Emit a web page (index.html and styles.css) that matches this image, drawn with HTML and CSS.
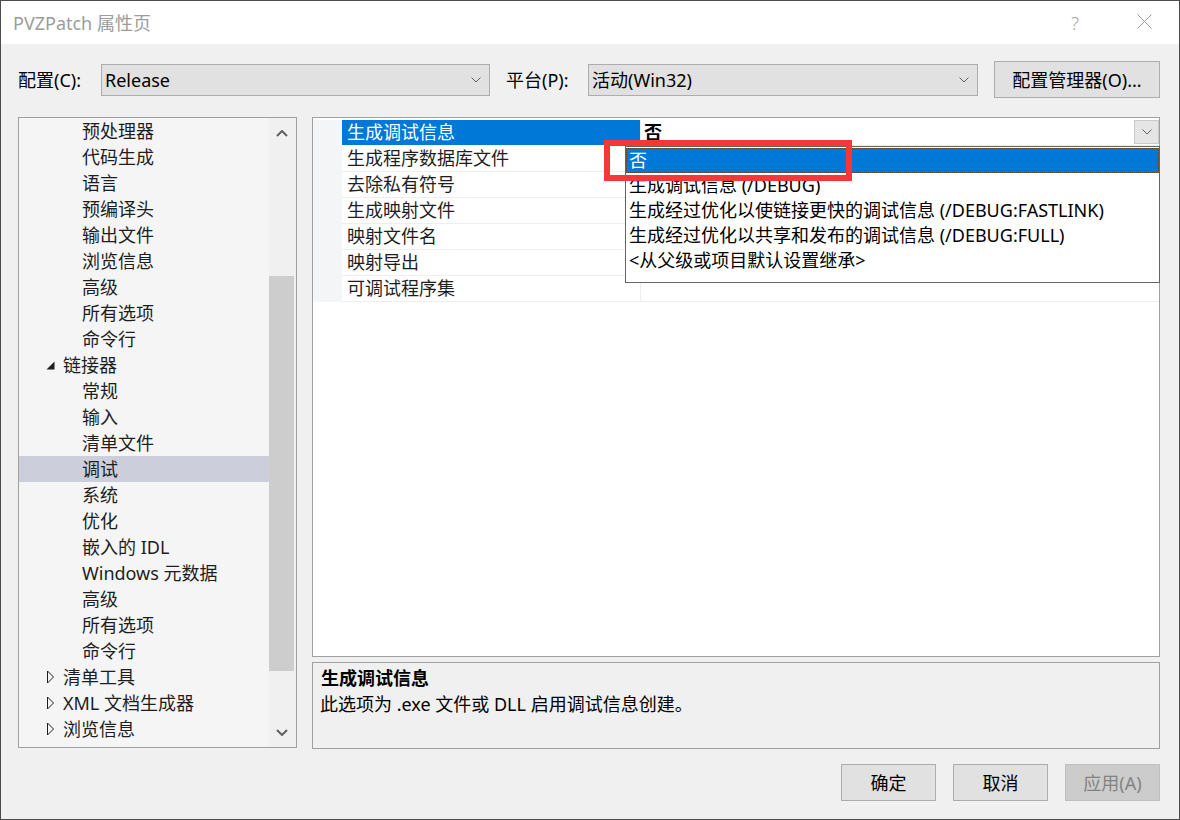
FILE: index.html
```html
<!DOCTYPE html>
<html lang="zh-CN">
<head>
<meta charset="utf-8">
<title>PVZPatch 属性页</title>
<link rel="stylesheet" href="styles.css">
</head>
<body>
<div class="window">
  <div class="titlebar">
    <span class="title">PVZPatch 属性页</span>
    <span class="tb-help">?</span>
    <svg class="tb-close" width="15" height="15" viewBox="0 0 15 15"><path d="M0.5 0.5 L14.5 14.5 M14.5 0.5 L0.5 14.5" stroke="#9a9a9a" stroke-width="1" fill="none"/></svg>
  </div>

  <div class="config-row">
    <span class="lbl lbl-config">配置(C):</span>
    <div class="combo combo-config">
      <span class="combo-text">Release</span>
      <svg class="chev" width="10" height="6" viewBox="0 0 10 6"><path d="M0.5 0.5 L5 5 L9.5 0.5" stroke="#606060" stroke-width="1" fill="none"/></svg>
    </div>
    <span class="lbl lbl-platform">平台(P):</span>
    <div class="combo combo-platform">
      <span class="combo-text">活动(Win32)</span>
      <svg class="chev" width="10" height="6" viewBox="0 0 10 6"><path d="M0.5 0.5 L5 5 L9.5 0.5" stroke="#606060" stroke-width="1" fill="none"/></svg>
    </div>
    <button class="btn btn-manager">配置管理器(O)...</button>
  </div>

  <div class="main">
    <div class="tree">
      <ul class="tree-list">
        <li class="node l2">预处理器</li>
        <li class="node l2">代码生成</li>
        <li class="node l2">语言</li>
        <li class="node l2">预编译头</li>
        <li class="node l2">输出文件</li>
        <li class="node l2">浏览信息</li>
        <li class="node l2">高级</li>
        <li class="node l2">所有选项</li>
        <li class="node l2">命令行</li>
        <li class="node l1"><svg class="tri" width="9" height="9" viewBox="0 0 9 9"><path d="M8.5 0.5 L8.5 8.5 L0.5 8.5 Z" fill="#1e1e1e"/></svg>链接器</li>
        <li class="node l2">常规</li>
        <li class="node l2">输入</li>
        <li class="node l2">清单文件</li>
        <li class="node l2 selected">调试</li>
        <li class="node l2">系统</li>
        <li class="node l2">优化</li>
        <li class="node l2">嵌入的 IDL</li>
        <li class="node l2">Windows 元数据</li>
        <li class="node l2">高级</li>
        <li class="node l2">所有选项</li>
        <li class="node l2">命令行</li>
        <li class="node l1"><svg class="tri" width="9" height="14" viewBox="0 0 9 14"><path d="M1.5 1 L7.5 7 L1.5 13 Z" stroke="#1e1e1e" stroke-width="1" fill="none"/></svg>清单工具</li>
        <li class="node l1"><svg class="tri" width="9" height="14" viewBox="0 0 9 14"><path d="M1.5 1 L7.5 7 L1.5 13 Z" stroke="#1e1e1e" stroke-width="1" fill="none"/></svg>XML 文档生成器</li>
        <li class="node l1"><svg class="tri" width="9" height="14" viewBox="0 0 9 14"><path d="M1.5 1 L7.5 7 L1.5 13 Z" stroke="#1e1e1e" stroke-width="1" fill="none"/></svg>浏览信息</li>
      </ul>
      <div class="scrollbar">
        <div class="sb-arrow">
          <svg width="12" height="7" viewBox="0 0 12 7"><path d="M1 6 L6 1 L11 6" stroke="#606060" stroke-width="2" fill="none"/></svg>
        </div>
        <div class="sb-track"><div class="sb-thumb" style="margin-top:128px;height:395px"></div></div>
        <div class="sb-arrow">
          <svg width="12" height="7" viewBox="0 0 12 7"><path d="M1 1 L6 6 L11 1" stroke="#606060" stroke-width="2" fill="none"/></svg>
        </div>
      </div>
    </div>

    <div class="right">
      <div class="grid">
        <div class="grid-rows">
          <div class="prow active">
            <div class="gutter"></div>
            <div class="pname">生成调试信息</div>
            <div class="pvalue"><span class="pval-bold">否</span>
              <span class="dd-btn"><svg width="10" height="6" viewBox="0 0 10 6"><path d="M0.5 0.5 L5 5 L9.5 0.5" stroke="#606060" stroke-width="1" fill="none"/></svg></span>
            </div>
          </div>
          <div class="prow"><div class="gutter"></div><div class="pname">生成程序数据库文件</div><div class="pvalue"></div></div>
          <div class="prow"><div class="gutter"></div><div class="pname">去除私有符号</div><div class="pvalue"></div></div>
          <div class="prow"><div class="gutter"></div><div class="pname">生成映射文件</div><div class="pvalue"></div></div>
          <div class="prow"><div class="gutter"></div><div class="pname">映射文件名</div><div class="pvalue"></div></div>
          <div class="prow"><div class="gutter"></div><div class="pname">映射导出</div><div class="pvalue"></div></div>
          <div class="prow"><div class="gutter"></div><div class="pname">可调试程序集</div><div class="pvalue"></div></div>
        </div>

        <ul class="dropdown">
          <li class="dd-item dd-selected">否</li>
          <li class="dd-item">生成调试信息 (/DEBUG)</li>
          <li class="dd-item">生成经过优化以使链接更快的调试信息 (/DEBUG:FASTLINK)</li>
          <li class="dd-item">生成经过优化以共享和发布的调试信息 (/DEBUG:FULL)</li>
          <li class="dd-item">&lt;从父级或项目默认设置继承&gt;</li>
        </ul>
        <div class="annot"></div>
      </div>

      <div class="desc">
        <div class="desc-title">生成调试信息</div>
        <div class="desc-body">此选项为 .exe 文件或 DLL 启用调试信息创建。</div>
      </div>
    </div>
  </div>

  <div class="footer">
    <button class="btn fbtn">确定</button>
    <button class="btn fbtn">取消</button>
    <button class="btn fbtn disabled">应用(A)</button>
  </div>
</div>
</body>
</html>
```

FILE: styles.css
```css
* { box-sizing: border-box; }

html, body {
  margin: 0;
  padding: 0;
}

body {
  font-family: "Noto Sans", "Noto Sans CJK SC", sans-serif;
  font-size: 18px;
  color: #000;
  background: #f0f0f0;
}

.window {
  width: 1180px;
  height: 820px;
  border: 1px solid #4d4d4d;
  background: #f0f0f0;
  display: flex;
  flex-direction: column;
  overflow: hidden;
}

/* title bar */
.titlebar {
  height: 43px;
  background: #fff;
  display: flex;
  align-items: center;
  padding-left: 12px;
  padding-right: 27px;
  flex: none;
}

.title {
  flex: 1;
  color: #9c9c9c;
  font-size: 18px;
  line-height: 24px;
}

.tb-help {
  color: #a6a6a6;
  font-size: 19px;
  line-height: 24px;
  font-weight: 300;
  width: 10px;
  margin-right: 56px;
  margin-left: -1px;
}

.tb-close {
  display: block;
  margin-bottom: 2px;
}

/* config row */
.config-row {
  margin-top: 17px;
  height: 37px;
  display: flex;
  align-items: center;
  padding-left: 17px;
  flex: none;
}

.lbl {
  line-height: 24px;
  white-space: nowrap;
}

.lbl-config { width: 83px; }
.lbl-platform { width: 82px; margin-left: 16px; }

.combo {
  height: 32px;
  background: #e1e1e1;
  border: 1px solid #adadad;
  display: flex;
  align-items: center;
  padding-left: 3px;
  padding-right: 8px;
}

.combo-config { width: 389px; }
.combo-platform { width: 390px; }

.combo-text {
  flex: 1;
  line-height: 24px;
}

.chev { display: block; }

.btn {
  font-family: inherit;
  font-size: 18px;
  color: #000;
  background: #e1e1e1;
  border: 1px solid #adadad;
  padding: 0;
  margin: 0;
  line-height: 24px;
}

.btn-manager {
  margin-left: 16px;
  width: 166px;
  height: 37px;
}

/* main */
.main {
  margin-top: 19px;
  height: 632px;
  display: flex;
  align-items: flex-start;
  padding-left: 17px;
  flex: none;
}

.tree {
  width: 279px;
  height: 631px;
  border: 1px solid #a0a0a0;
  background: #f5f5f5;
  display: flex;
}

.tree-list {
  list-style: none;
  margin: 0;
  padding: 0;
  flex: 1;
  overflow: hidden;
}

.node {
  height: 26px;
  line-height: 26px;
  white-space: nowrap;
  color: #1e1e1e;
  display: flex;
  align-items: center;
}

.node.l2 { padding-left: 63px; }
.node.l1 { padding-left: 27px; }

.node.selected { background: #cccedb; }

.tri {
  display: block;
  width: 9px;
  margin-right: 8px;
  flex: none;
}

.scrollbar {
  width: 27px;
  background: #f0f0f0;
  display: flex;
  flex-direction: column;
  padding-right: 2px;
}

.sb-arrow {
  height: 30px;
  display: flex;
  align-items: center;
  justify-content: center;
  flex: none;
}

.sb-arrow svg { display: block; }

.sb-track {
  flex: 1;
}

.sb-thumb {
  background: #cdcdcd;
  width: 100%;
}

/* right column */
.right {
  margin-left: 15px;
  width: 848px;
  display: flex;
  flex-direction: column;
  gap: 5px;
}

.grid {
  position: relative;
  height: 540px;
  border: 1px solid #a0a0a0;
  background: #fff;
}

.grid-rows {
  padding-top: 2px;
}

.prow {
  height: 26px;
  display: flex;
}

.gutter {
  width: 29px;
  background: #f4f5f7;
  flex: none;
}

.pname {
  width: 299px;
  flex: none;
  padding-left: 5px;
  line-height: 25px;
  border-bottom: 1px solid #eeeeee;
  border-right: 1px solid #eeeeee;
  white-space: nowrap;
  color: #1e1e1e;
}

.prow.active .pname {
  background: #0078d7;
  color: #fff;
  height: 25px;
  line-height: 25px;
  border-bottom: none;
}

.pvalue {
  flex: 1;
  padding-left: 3px;
  border-bottom: 1px solid #eeeeee;
  display: flex;
  align-items: flex-start;
  line-height: 25px;
}

.pval-bold {
  font-weight: 700;
  flex: 1;
}

.dd-btn {
  width: 25px;
  height: 24px;
  background: #e5e5e5;
  border: 1px solid #cacaca;
  display: flex;
  align-items: center;
  justify-content: center;
}

.dd-btn svg { display: block; }

/* dropdown overlay */
.dropdown {
  position: absolute;
  left: 312px;
  top: 28px;
  width: 535px;
  height: 137px;
  margin: 0;
  padding: 1px 0 0 0;
  list-style: none;
  background: #fff;
  border: 1px solid #646464;
}

.dd-item {
  height: 25px;
  line-height: 25px;
  padding-left: 3px;
  white-space: nowrap;
  color: #000;
}

.dd-item.dd-selected {
  background: #0078d7;
  color: #fff;
  height: 25px;
  outline: 1px dotted #5a4020;
  outline-offset: -1px;
}

/* annotation rectangle */
.annot {
  position: absolute;
  left: 291px;
  top: 22px;
  width: 248px;
  height: 41px;
  border: 6px solid #f6373a;
}

/* description */
.desc {
  height: 87px;
  border: 1px solid #a0a0a0;
  background: #f0f0f0;
  padding: 2px 8px 0 7px;
}

.desc-title {
  font-weight: 700;
  line-height: 26px;
  padding-left: 1px;
}

.desc-body {
  line-height: 26px;
}

/* footer */
.footer {
  margin-top: 15px;
  height: 37px;
  display: flex;
  justify-content: flex-end;
  gap: 17px;
  padding-right: 19px;
  flex: none;
}

.fbtn {
  width: 95px;
  height: 37px;
}

.fbtn.disabled {
  background: #cccccc;
  border-color: #bfbfbf;
  color: #838383;
}
```
